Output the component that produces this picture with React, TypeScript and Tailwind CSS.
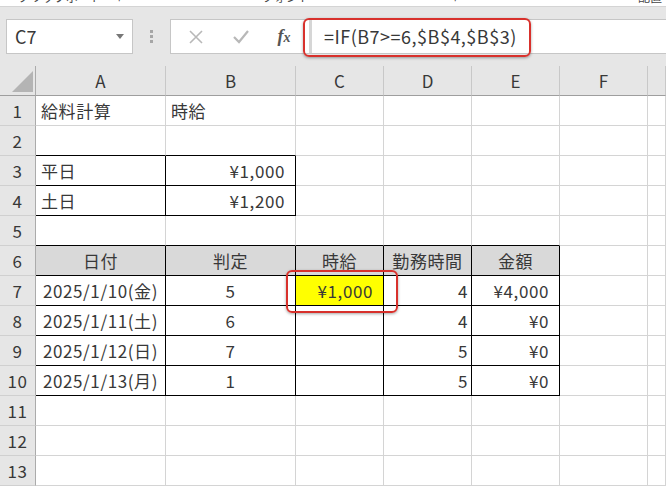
import React from "react";

const FONT = { fontFamily: '"Noto Sans CJK JP", "Noto Sans", sans-serif' };

type Align = "l" | "c" | "r" | "rr";

const cols = ["A", "B", "C", "D", "E", "F", ""];

const data: Record<number, string[]> = {
  1: ["給料計算", "時給"],
  3: ["平日", "¥1,000"],
  4: ["土日", "¥1,200"],
  6: ["日付", "判定", "時給", "勤務時間", "金額"],
  7: ["2025/1/10(金)", "5", "¥1,000", "4", "¥4,000"],
  8: ["2025/1/11(土)", "6", "", "4", "¥0"],
  9: ["2025/1/12(日)", "7", "", "5", "¥0"],
  10: ["2025/1/13(月)", "1", "", "5", "¥0"],
};

function bordered(r: number, c: number) {
  if (r >= 3 && r <= 4 && c >= 0 && c <= 1) return true;
  if (r >= 6 && r <= 10 && c >= 0 && c <= 4) return true;
  return false;
}

function align(r: number, c: number): Align {
  if (r === 1) return "l";
  if (r === 3 || r === 4) return c === 0 ? "l" : "rr";
  if (r === 6) return "c";
  if (r >= 7 && r <= 10) {
    if (c <= 1) return "c";
    if (c === 3) return "r";
    return "rr";
  }
  return "l";
}

function Cell({ r, c }: { r: number; c: number }) {
  const text = data[r]?.[c] ?? "";
  const rb = bordered(r, c) || bordered(r, c + 1);
  const bb = bordered(r, c) || bordered(r + 1, c);
  const a = align(r, c);
  const bg =
    r === 6 && c <= 4
      ? "bg-[#d9d9d9]"
      : r === 7 && c === 2
      ? "bg-[#ffff00]"
      : "bg-white";
  const alignCls =
    a === "l"
      ? "justify-start pl-[5px]"
      : a === "c"
      ? "justify-center"
      : a === "r"
      ? "justify-end pr-[3px]"
      : "justify-end pr-[10px]";
  return (
    <div
      className={`h-[30px] flex items-center whitespace-nowrap overflow-hidden text-[17px] tracking-[0.6px] text-[#383838] border-r border-b ${bg} ${alignCls} ${
        rb ? "border-r-black" : "border-r-[#d4d4d4]"
      } ${bb ? "border-b-black" : "border-b-[#d4d4d4]"}`}
    >
      {text}
    </div>
  );
}

export default function App() {
  const rows = Array.from({ length: 13 }, (_, i) => i + 1);
  return (
    <div className="w-[666px] h-[488px] overflow-hidden bg-white" style={FONT}>
      {/* ribbon remnant */}
      <div className="relative h-[7px] bg-white border-b border-[#d4d4d4] overflow-hidden text-[12px] text-[#444]">
        <span className="absolute left-[18px] top-[-12px]">クリップボード</span>
        <span className="absolute left-[118px] top-[-12px]">⌐</span>
        <span className="absolute left-[262px] top-[-12px]">フォント</span>
        <span className="absolute left-[454px] top-[-12px]">⌐</span>
        <span className="absolute left-[638px] top-[-12px]">配置</span>
      </div>

      {/* formula bar */}
      <div className="relative h-[59px] bg-[#e6e6e6] flex items-start pt-[12px]">
        <div className="ml-[6px] w-[127px] h-[35px] bg-white border border-[#c6c6c6] flex items-center justify-between pl-[8px] pr-[8px]">
          <span className="text-[18px] text-[#383838]">C7</span>
          <svg width="8" height="5" viewBox="0 0 8 5">
            <path d="M0 0 L8 0 L4 5 Z" fill="#777" />
          </svg>
        </div>
        <div className="w-[37px] h-[35px] flex flex-col items-center justify-center gap-[2px]">
          <div className="w-[3px] h-[3px] bg-[#a6a6a6]" />
          <div className="w-[3px] h-[3px] bg-[#a6a6a6]" />
          <div className="w-[3px] h-[3px] bg-[#a6a6a6]" />
        </div>
        <div className="flex-1 h-[35px] bg-white border border-r-0 border-[#c6c6c6] flex items-center">
          <div className="w-[45px] flex justify-center ml-[2px]">
            <svg width="16" height="16" viewBox="0 0 16 16">
              <path d="M2 2 L14 14 M14 2 L2 14" stroke="#b8b8b8" strokeWidth="1.6" />
            </svg>
          </div>
          <div className="w-[45px] flex justify-center">
            <svg width="18" height="16" viewBox="0 0 18 16">
              <path d="M2 8 L7 13 L16 2" stroke="#b8b8b8" strokeWidth="2.2" fill="none" />
            </svg>
          </div>
          <div className="w-[42px] flex justify-center">
            <span
              className="text-[18px] text-[#555] italic font-bold"
              style={{ fontFamily: '"Liberation Serif", serif' }}
            >
              f<span className="text-[14px]">x</span>
            </span>
          </div>
          <div className="ml-[4px] w-[3px] h-[33px] bg-[#d6d6d6]" />
          <div className="ml-[12px] text-[18px] tracking-[0.5px] text-[#383838] whitespace-nowrap">
            =IF(B7&gt;=6,$B$4,$B$3)
          </div>
        </div>
        <div className="absolute left-[303px] top-[11px] w-[228px] h-[39px] rounded-[6px] border-2 border-[#d8312c] shadow-[0_1px_3px_rgba(0,0,0,0.35)]" />
      </div>

      {/* sheet */}
      <div className="relative grid grid-cols-[36px_130px_130px_88px_88px_88px_88px_18px]">
        {/* header row */}
        <div className="h-[30px] bg-[#e6e6e6] border-r border-b border-r-[#ababab] border-b-[#9e9e9e] relative">
          <svg className="absolute left-[12px] top-[5px]" width="22" height="22" viewBox="0 0 22 22">
            <path d="M21 0 L21 21 L0 21 Z" fill="#b4b4b4" />
          </svg>
        </div>
        {cols.map((c, i) => (
          <div
            key={i}
            className="h-[30px] bg-[#e6e6e6] border-r border-b border-r-[#c8c8c8] border-b-[#9e9e9e] flex items-center justify-center text-[17px] text-[#383838]"
          >
            {c}
          </div>
        ))}
        {rows.map((r) => (
          <React.Fragment key={r}>
            <div className="h-[30px] bg-[#e6e6e6] border-r border-b border-r-[#ababab] border-b-[#d0d0d0] flex items-center justify-center text-[17px] tracking-[0.5px] text-[#383838]">
              {r}
            </div>
            {cols.map((_, c) => (
              <Cell key={c} r={r} c={c} />
            ))}
          </React.Fragment>
        ))}
        <div className="absolute left-[286px] top-[204px] w-[112px] h-[43px] rounded-[6px] border-2 border-[#d8312c] shadow-[0_1px_3px_rgba(0,0,0,0.35)]" />
      </div>
    </div>
  );
}
